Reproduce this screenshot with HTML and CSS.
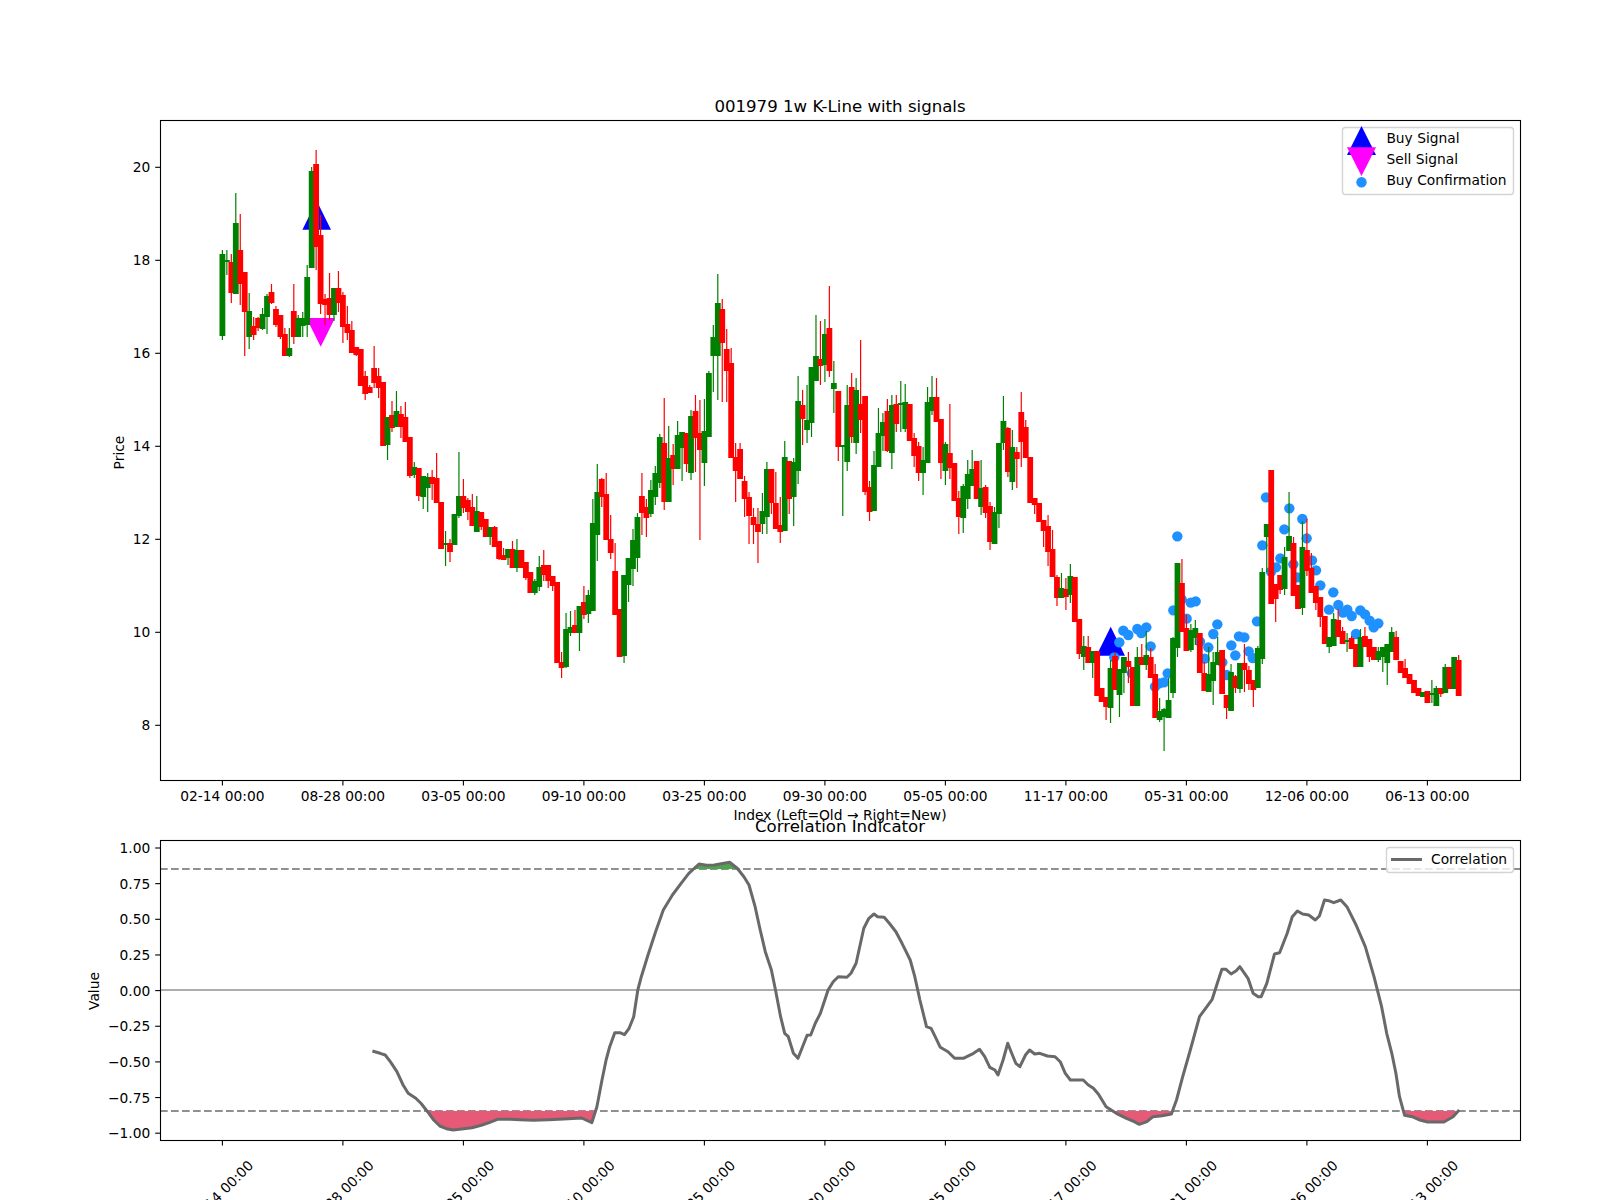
FILE: index.html
```html
<!DOCTYPE html>
<html lang="en">
<head>
    <meta charset="UTF-8">
    <title>001979 1w K-Line with signals</title>
    <link rel="stylesheet" href="styles.css">
</head>
<body>
    <svg class="figure" id="figure" width="1600" height="1200" viewBox="0 0 1600 1200" xmlns="http://www.w3.org/2000/svg">
        <defs>
            <clipPath id="below-low"><rect x="160" y="1111" width="1360" height="29"/></clipPath>
            <clipPath id="above-high"><rect x="160" y="840" width="1360" height="29"/></clipPath>
        </defs>

        <!-- K-line panel -->
        <text class="title" x="840" y="112">001979 1w K-Line with signals</text>
        <polygon class="buy" points="302.4,229.7 316.7,200.7 331,229.7"/>
        <polygon class="buy" points="1096.4,655.7 1110.7,626.7 1125,655.7"/>
        <polygon class="sell" points="306.4,318 335,318 320.7,346.7"/>
        <g id="dots"></g>
        <g id="candles"></g>
        <rect class="spine" x="160.5" y="120.5" width="1360" height="660"/>
        <g id="price-ticks"></g>
        <g id="kline-xticks"></g>
        <text class="axis-label" x="840" y="820">Index (Left=Old → Right=New)</text>
        <text class="axis-label" transform="translate(124,452.5) rotate(-90)">Price</text>

        <g class="legend">
            <rect class="legend-box" x="1342.5" y="127.5" width="171" height="67" rx="3"/>
            <polygon class="buy" points="1347,155 1361.5,126 1376,155"/>
            <polygon class="sell" points="1347,147.3 1376,147.3 1361.5,176"/>
            <circle class="dot" cx="1361.5" cy="182.3" r="5.2"/>
            <text class="legend-text" x="1386.4" y="143.3">Buy Signal</text>
            <text class="legend-text" x="1386.4" y="164.3">Sell Signal</text>
            <text class="legend-text" x="1386.4" y="185.3">Buy Confirmation</text>
        </g>

        <!-- Correlation panel -->
        <text class="title" x="840" y="831.5">Correlation Indicator</text>
        <line class="zero-line" x1="160" y1="990" x2="1520" y2="990"/>
        <line class="level-line" x1="160" y1="869" x2="1520" y2="869"/>
        <line class="level-line" x1="160" y1="1111" x2="1520" y2="1111"/>
        <path class="fill-low" id="fill-low" clip-path="url(#below-low)"/>
        <path class="fill-high" id="fill-high" clip-path="url(#above-high)"/>
        <polyline class="corr-line" id="corr-line"/>
        <rect class="spine" x="160.5" y="840.5" width="1360" height="300"/>
        <g id="value-ticks"></g>
        <g id="corr-xticks"></g>
        <text class="axis-label" transform="translate(99,991) rotate(-90)">Value</text>

        <g class="legend">
            <rect class="legend-box" x="1386.5" y="847.5" width="127" height="25" rx="3"/>
            <line class="corr-line" x1="1391" y1="859.5" x2="1422" y2="859.5"/>
            <text class="legend-text" x="1431" y="863.5">Correlation</text>
        </g>
    </svg>

    <script src="script.js"></script>
</body>
</html>
```

FILE: styles.css
```css
body {
    margin: 0;
    background-color: #fff;
}

.figure {
    display: block;
    font-family: "DejaVu Sans", sans-serif;
}

.title {
    font-size: 16.6px;
    text-anchor: middle;
    fill: #000;
}

.axis-label {
    font-size: 13.85px;
    text-anchor: middle;
    fill: #000;
}

.tick-label {
    font-size: 13.8px;
    text-anchor: middle;
    fill: #000;
}

.tick-label.right {
    text-anchor: end;
}

.tick {
    stroke: #000;
    stroke-width: 1.1;
}

.spine {
    fill: none;
    stroke: #000;
    stroke-width: 1.1;
}

.candle-r {
    fill: #f00;
    stroke: #f00;
}

.candle-g {
    fill: #008000;
    stroke: #008000;
}

.wick {
    stroke-width: 1.2;
}

.body {
    stroke: none;
}

.buy {
    fill: #00f;
}

.sell {
    fill: #f0f;
}

.dot {
    fill: #1e90ff;
}

.legend-box {
    fill: #fff;
    fill-opacity: 0.8;
    stroke: #d4d4d4;
    stroke-width: 1.4;
}

.legend-text {
    font-size: 13.8px;
    fill: #000;
}

.zero-line {
    stroke: #adadad;
    stroke-width: 2.2;
}

.level-line {
    stroke: #909090;
    stroke-width: 2.2;
    stroke-dasharray: 7.7 3.3;
}

.corr-line {
    fill: none;
    stroke: #696969;
    stroke-width: 3;
    stroke-linejoin: round;
}

.fill-low {
    fill: #e75a77;
}

.fill-high {
    fill: #4da64d;
}
```

FILE: script.js
```js
const SVG_NS = 'http://www.w3.org/2000/svg';

const FIRST_X = 222.4;
const STEP_X = 4.463;
const BODY_W = 5.8;
const TICK_DATES = ['02-14', '08-28', '03-05', '09-10', '03-25', '09-30', '05-05', '11-17', '05-31', '12-06', '06-13'];

// colour, wick top, wick bottom, body top, body bottom (page pixels)
const candles = [
    ['g',250,340,254,336],['g',250,275,260,262],['r',254,303,262,293],['g',193,294,223,294],
    ['r',214,305,250,284],['r',272,356,272,312],['g',293,349,311,337],['r',317,340,326,335],
    ['r',317,331,318,328],['g',308,330,314,329],['g',294,334,296,317],['r',284,304,292,303],
    ['r',306,327,309,325],['r',315,339,315,337],['r',328,356,334,356],['g',328,357,348,356],
    ['r',284,344,311,337],['g',315,337,318,337],['g',312,337,318,326],['g',265,337,277,325],
    ['g',167,268,171,268],['r',150,270,164,247],['r',215,314,235,304],['r',294,325,299,305],
    ['r',273,320,298,315],['g',288,321,288,315],['r',271,312,288,303],['r',292,343,295,327],
    ['r',306,340,324,333],['r',321,353,330,353],['r',347,356,347,355],['r',349,386,349,386],
    ['r',371,400,376,394],['r',385,393,387,393],['r',346,388,368,383],['r',368,398,376,388],
    ['r',382,446,382,446],['g',417,460,417,445],['r',401,432,415,428],['g',391,427,411,427],
    ['r',406,438,414,427],['r',402,442,417,442],['r',437,478,437,476],['g',462,478,467,475],
    ['r',468,501,468,496],['g',476,509,476,497],['g',473,512,477,488],['r',470,500,477,484],
    ['r',453,503,478,503],['r',502,549,502,549],['g',531,566,543,545],['r',539,562,543,552],
    ['g',514,545,514,545],['g',452,518,496,516],['r',479,513,496,508],['r',498,520,500,512],
    ['r',494,526,507,526],['g',496,532,511,532],['r',512,530,512,527],['r',519,537,519,537],
    ['g',527,545,527,537],['r',526,547,527,547],['r',541,560,541,559],['r',548,560,555,560],
    ['g',549,565,549,558],['r',541,568,549,568],['g',539,572,550,568],['r',550,568,550,568],
    ['r',562,580,562,578],['r',572,593,572,593],['g',579,595,581,593],['g',556,591,567,587],
    ['r',550,581,565,575],['r',565,588,565,581],['r',576,591,576,586],['r',582,663,582,663],
    ['r',652,678,662,668],['g',613,668,629,667],['g',611,636,627,633],['r',610,633,625,633],
    ['g',606,651,606,633],['r',586,619,602,615],['g',590,623,595,614],['g',499,611,523,611],
    ['g',464,561,492,535],['r',478,507,479,497],['r',473,540,494,540],['r',515,559,539,553],
    ['r',543,615,571,615],['r',609,657,609,657],['g',575,663,575,656],['g',558,602,558,585],
    ['g',529,586,540,569],['g',513,572,517,558],['r',473,535,496,513],['r',499,537,507,518],
    ['g',480,517,490,514],['g',466,505,473,497],['g',434,488,437,483],['r',398,510,443,502],
    ['g',426,502,458,502],['r',444,485,455,469],['g',421,469,435,469],['g',432,481,432,448],
    ['r',433,472,433,464],['g',410,480,416,473],['r',395,472,411,438],['r',400,540,433,450],
    ['g',399,486,431,463],['g',371,437,373,437],['g',325,392,337,356],['g',274,400,303,356],
    ['r',299,402,309,343],['r',329,402,349,371],['r',348,458,363,458],['r',443,502,457,471],
    ['r',443,479,449,479],['r',476,517,481,499],['r',492,544,497,516],['r',508,544,517,525],
    ['r',508,563,524,532],['g',493,534,511,524],['g',462,534,469,517],['r',469,514,469,503],
    ['r',472,529,503,529],['r',497,543,525,532],['g',441,531,457,531],['r',461,514,461,499],
    ['g',458,526,462,497],['g',376,484,401,471],['r',390,445,405,419],['g',385,443,420,430],
    ['g',367,437,367,423],['g',315,381,356,381],['r',321,385,359,366],['g',319,382,334,365],
    ['r',286,377,328,371],['g',361,413,383,389],['r',391,461,391,447],['g',445,516,445,447],
    ['g',385,471,405,462],['r',373,443,387,437],['g',378,454,390,443],['r',340,433,404,420],
    ['r',396,495,396,492],['r',481,521,487,512],['g',451,511,465,511],['g',408,467,433,467],
    ['g',413,451,422,436],['r',399,452,411,451],['g',395,469,405,453],['r',395,432,404,424],
    ['g',381,432,403,405],['g',384,432,402,429],['r',404,441,404,441],['r',433,467,438,456],
    ['r',442,481,446,473],['g',447,495,460,473],['g',387,463,402,463],['g',376,415,397,411],
    ['r',378,422,397,422],['r',419,479,419,463],['g',442,485,444,471],['r',404,479,453,468],
    ['r',463,501,463,501],['r',491,534,498,517],['g',484,533,486,518],['g',460,509,474,499],
    ['g',450,486,469,486],['r',461,499,461,499],['g',460,515,488,507],['r',485,518,487,513],
    ['r',502,550,506,542],['g',507,544,512,544],['g',443,528,443,514],['g',396,450,421,443],
    ['r',427,477,428,472],['g',430,490,447,482],['r',447,488,452,459],['r',392,467,412,442],
    ['r',420,458,427,458],['r',457,503,457,503],['r',498,514,498,505],['r',503,522,503,522],
    ['r',520,547,520,531],['r',515,566,526,552],['r',530,577,549,577],['r',575,606,577,598],
    ['g',573,598,588,598],['r',578,610,589,597],['g',564,603,576,595],['r',577,622,577,622],
    ['r',619,659,619,654],['g',636,670,646,657],['r',636,663,647,663],['g',651,678,651,663],
    ['r',651,696,651,696],['r',688,702,688,702],['r',697,720,697,707],['g',660,723,668,708],
    ['r',652,690,656,690],['g',669,717,669,695],['g',657,693,657,673],['r',652,683,661,667],
    ['r',667,706,667,706],['g',647,706,657,706],['r',644,665,657,665],['g',631,670,655,665],
    ['r',648,678,657,678],['r',664,718,674,718],['g',698,722,711,720],['g',708,751,709,717],
    ['g',678,718,700,718],['g',637,698,638,693],['g',563,657,563,648],['r',559,632,583,632],
    ['r',615,651,628,651],['g',624,652,630,650],['g',620,645,628,638],['r',633,673,633,673],
    ['r',662,691,673,691],['g',647,692,674,692],['g',652,705,662,681],['g',637,665,652,665],
    ['r',650,694,650,694],['r',695,719,695,708],['g',664,711,672,711],['r',675,693,676,688],
    ['g',663,693,663,689],['r',644,692,663,670],['r',666,690,670,684],['r',680,707,680,690],
    ['g',646,688,648,688],['g',568,664,572,659],['g',524,572,524,537],['r',470,604,470,604],
    ['r',584,622,584,599],['r',575,594,575,590],['g',547,595,557,589],['g',492,551,536,551],
    ['r',537,596,543,596],['r',585,609,585,609],['g',521,615,547,608],['r',519,576,550,571],
    ['r',553,593,568,593],['r',586,610,586,603],['r',597,627,597,617],['r',616,644,616,644],
    ['g',637,653,637,647],['g',613,646,619,646],['r',609,637,620,637],['r',627,644,631,644],
    ['g',633,652,640,642],['r',636,649,638,649],['r',644,667,644,667],['g',629,667,637,667],
    ['r',627,647,636,647],['r',639,662,639,657],['r',647,660,647,660],['g',647,662,651,660],
    ['g',647,672,647,657],['g',644,685,644,663],['g',627,652,632,652],['r',631,660,637,660],
    ['r',661,673,661,673],['r',659,678,668,678],['r',674,684,674,684],['r',680,693,680,693],
    ['r',688,696,688,696],['g',692,697,692,697],['r',691,703,691,703],['g',680,703,693,695],
    ['g',686,706,688,706],['r',688,697,688,694],['g',664,693,667,693],['r',667,689,667,689],
    ['g',657,689,657,689],['r',655,696,660,696]
];

// buy confirmation dots, read from a 3x crop whose origin is (1060, 460)
const dots = [
    [163,592],[178,547],[190,512],[205,525],[216,640],[232,507],[244,519],[259,502],[272,559],
    [285,680],[298,670],[312,667],[323,640],[340,451],[352,229],[365,418],[380,476],[392,428],
    [407,424],[420,545],[434,596],[445,562],[460,522],[472,493],[487,607],[500,645],[514,556],
    [526,586],[537,529],[553,532],[566,574],[578,594],[591,484],[607,256],[618,112],[633,335],
    [648,322],[661,295],[673,208],[688,145],[700,313],[712,352],[727,177],[740,235],[756,301],
    [768,331],[781,376],[807,449],[820,397],[835,435],[849,458],[862,449],[875,468],[888,522],
    [901,451],[915,463],[929,482],[941,502],[955,490]
];

// correlation curve, read from crops at x / 1.96 and 760 + y / 3
const corrLeft = [
    [730,873],[745,880],[755,885],[765,905],[778,935],[790,975],[800,1000],[815,1015],[825,1030],
    [838,1055],[850,1080],[862,1098],[875,1106],[888,1110],[905,1107],[925,1103],[945,1095],
    [960,1087],[975,1078],[1000,1078],[1020,1079],[1045,1081],[1075,1079],[1105,1077],[1140,1074],
    [1160,1088],[1170,1040],[1180,960],[1188,900],[1195,860],[1205,818],[1215,818],[1224,824],
    [1233,805],[1242,770],[1250,690],[1257,650],[1270,585],[1285,515],[1300,450],[1318,405],
    [1335,370],[1350,340],[1370,312],[1385,316],[1400,315],[1430,307],[1445,325],[1458,350],
    [1468,375],[1480,440],[1490,510],[1500,575],[1512,630],[1520,690],[1530,770],[1538,820],
    [1545,830],[1555,880],[1564,895]
];
const corrRight = [
    [0,880],[14,826],[21,825],[30,790],[40,760],[55,690],[65,665],[75,650],[92,652],[100,640],
    [110,610],[125,505],[135,475],[145,462],[152,470],[165,472],[175,490],[188,515],[200,550],
    [208,575],[216,600],[225,650],[235,720],[248,800],[257,805],[265,830],[275,862],[290,875],
    [303,895],[320,895],[340,880],[352,868],[362,890],[372,922],[382,930],[388,945],[398,900],
    [407,850],[415,880],[423,910],[431,920],[442,885],[450,870],[460,882],[470,880],[485,888],
    [500,890],[510,905],[520,940],[530,960],[555,960],[565,975],[575,985],[585,1003],[600,1040],
    [620,1060],[640,1075],[655,1085],[665,1093],[680,1085],[692,1070],[710,1067],[728,1062],
    [738,1020],[750,950],[765,870],[783,770],[795,745],[808,718],[818,670],[827,628],[835,628],
    [845,642],[855,632],[862,620],[878,655],[888,700],[898,710],[904,710],[915,670],[930,582],
    [940,578],[955,520],[965,470],[975,453],[985,462],[997,465],[1010,480],[1018,468],[1028,420],
    [1036,422],[1046,428],[1060,420],[1072,440],[1090,495],[1108,560],[1125,650],[1140,740],
    [1150,820],[1160,880],[1168,940],[1175,1010],[1185,1066],[1200,1070],[1215,1080],[1230,1086],
    [1262,1086],[1280,1070],[1292,1050]
];

function make(parent, tag, attrs, text) {
    const el = document.createElementNS(SVG_NS, tag);
    Object.keys(attrs).forEach(key => el.setAttribute(key, attrs[key]));
    if (text) el.textContent = text;
    document.getElementById(parent).appendChild(el);
}

function drawCandles() {
    candles.forEach((c, i) => {
        const x = FIRST_X + STEP_X * i;
        const cls = 'candle-' + c[0];
        make('candles', 'line', { class: cls + ' wick', x1: x, x2: x, y1: c[1], y2: c[2] });
        make('candles', 'rect', {
            class: cls + ' body',
            x: x - BODY_W / 2,
            y: c[3],
            width: BODY_W,
            height: Math.max(c[4] - c[3], 2)
        });
    });
}

function drawDots() {
    dots.forEach(d => {
        make('dots', 'circle', { class: 'dot', cx: 1060 + d[0] / 3, cy: 460 + d[1] / 3, r: 5.2 });
    });
}

function drawCorrelation() {
    const left = corrLeft.map(p => [p[0] / 1.96, 760 + p[1] / 3]);
    const right = corrRight.map(p => [800 + p[0] / 1.96, 760 + p[1] / 3]);
    const pts = left.concat(right);
    const line = pts.map(p => p[0].toFixed(1) + ',' + p[1].toFixed(1)).join(' ');
    const firstX = pts[0][0];
    const lastX = pts[pts.length - 1][0];

    document.getElementById('corr-line').setAttribute('points', line);
    document.getElementById('fill-low').setAttribute('d', 'M' + line + ` L${lastX},1111 L${firstX},1111 Z`);
    document.getElementById('fill-high').setAttribute('d', 'M' + line + ` L${lastX},869 L${firstX},869 Z`);
}

function drawTicks() {
    [20, 18, 16, 14, 12, 10, 8].forEach(v => {
        const y = 167.3 + (20 - v) * 46.5;
        make('price-ticks', 'line', { class: 'tick', x1: 155.2, x2: 160, y1: y, y2: y });
        make('price-ticks', 'text', { class: 'tick-label right', x: 150.3, y: y + 5 }, String(v));
    });

    ['1.00', '0.75', '0.50', '0.25', '0.00', '\u22120.25', '\u22120.50', '\u22120.75', '\u22121.00'].forEach((label, i) => {
        const y = 848 + i * 35.65;
        make('value-ticks', 'line', { class: 'tick', x1: 155.2, x2: 160, y1: y, y2: y });
        make('value-ticks', 'text', { class: 'tick-label right', x: 150.3, y: y + 5 }, label);
    });

    TICK_DATES.forEach((date, i) => {
        const x = FIRST_X + 120.5 * i;
        const label = date + ' 00:00';
        make('kline-xticks', 'line', { class: 'tick', x1: x, x2: x, y1: 781, y2: 785.5 });
        make('kline-xticks', 'text', { class: 'tick-label', x: x, y: 801 }, label);
        make('corr-xticks', 'line', { class: 'tick', x1: x, x2: x, y1: 1141, y2: 1145.5 });
        make('corr-xticks', 'text', {
            class: 'tick-label',
            transform: `translate(${x + 2},1196) rotate(-45)`
        }, label);
    });
}

drawDots();
drawCandles();
drawCorrelation();
drawTicks();
```
